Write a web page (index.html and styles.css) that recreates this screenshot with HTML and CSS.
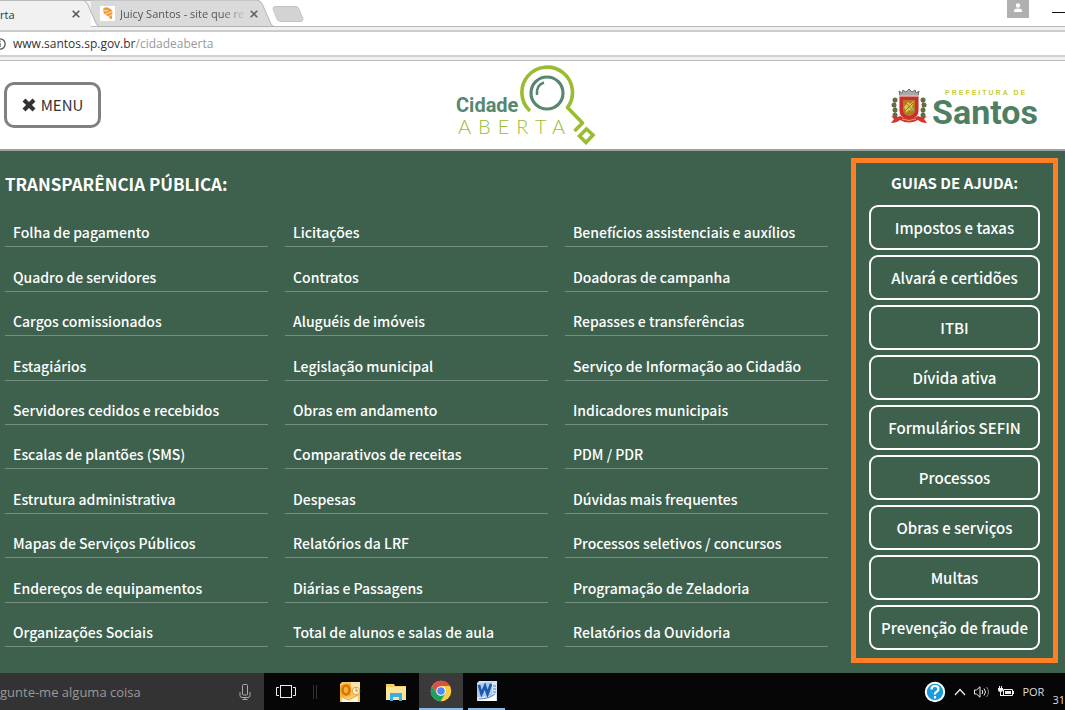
FILE: index.html
```html
<!DOCTYPE html>
<html lang="pt-BR">
<head>
    <meta charset="UTF-8">
    <meta name="viewport" content="width=device-width, initial-scale=1.0">
    <title>Cidade Aberta</title>
    <link rel="stylesheet" href="styles.css">
</head>
<body>
    <div class="Browser-Bar">
        <div class="Tabs">
            <div class="Tab Active">
                <span class="Tab-Title">rta</span>
                <button type="button" class="Tab-Close" aria-label="Fechar aba">
                    <svg width="8" height="8" viewBox="0 0 8 8"><path d="M.7.7l6.6 6.6M7.3.7L.7 7.3" stroke="#555" stroke-width="1.6"/></svg>
                </button>
            </div>
            <div class="Tab Inactive">
                <svg class="Tab-Shape" viewBox="0 0 188 27" preserveAspectRatio="none"><path d="M0 0H169Q173 0 175 4L184 24Q185 26 187 26.500H9Q6 26 5 23L0 11Z" fill="#dadada"/><path d="M0 0H169Q173 0 175 4L184 24Q185 26 187 26.500" fill="none" stroke="#b5b5b5"/><path d="M-8 0Q-5 1-3 5L5 23Q6 26 9 26.500H188" fill="none" stroke="#b0b0b0"/></svg>
                <svg class="Favicon" width="15" height="15" viewBox="0 0 15 15"><path d="M0 0h15v15H0z" fill="#fff"/><path d="M3 3Q5 0 9 2L12 4Q13 7 12 10L12 13Q9 13 8 10Q3 9 3 3Z" fill="#f49a35"/><path d="M2 5L8 4.500M5 8.500L12 5.500M8 11L13 8" stroke="#fff" stroke-width=".7"/></svg>
                <span class="Tab-Title Fade">Juicy Santos - site que re</span>
                <button type="button" class="Tab-Close" aria-label="Fechar aba">
                    <svg width="8" height="8" viewBox="0 0 8 8"><path d="M.7.7l6.6 6.6M7.3.7L.7 7.3" stroke="#666" stroke-width="1.600"/></svg>
                </button>
            </div>
            <button type="button" class="New-Tab" aria-label="Nova aba">
                <svg width="32" height="16" viewBox="0 0 32 16"><path d="M3 .5H24Q26 .5 27 3L31 13Q31 15.500 29 15.500H9Q6 15.500 5 13L1 3Q1 .5 3 .5Z" fill="#d3d3d3" stroke="#c4c4c4"/></svg>
            </button>
            <div class="Window-Buttons">
                <button type="button" class="Profile" aria-label="Perfil">
                    <svg width="8" height="9" viewBox="0 0 8 9"><circle cx="4" cy="2.500" r="2.200" fill="#fff"/><path d="M0 9V7.500Q0 5.500 4 5.500T8 7.500V9Z" fill="#fff"/></svg>
                </button>
                <button type="button" class="Minimize" aria-label="Minimizar"></button>
            </div>
        </div>
        <div class="Address">
            <svg class="Info" width="12" height="12" viewBox="0 0 12 12"><circle cx="6" cy="6" r="5.200" fill="none" stroke="#555" stroke-width="1.300"/><path d="M6 5v4M6 2.800v1.300" stroke="#555" stroke-width="1.300"/></svg>
            <span class="Url">www.santos.sp.gov.br<span class="Path">/cidadeaberta</span></span>
        </div>
    </div>

    <header class="Site-Header">
        <button type="button" class="Menu-Button">
            <svg width="14" height="14" viewBox="0 0 14 14"><path d="M2 2l10 10M12 2L2 12" stroke="#333" stroke-width="4.200"/></svg>
            MENU
        </button>
        <svg class="Logo-Cidade" width="144" height="80" viewBox="0 0 144 80" role="img" aria-label="Cidade Aberta">
            <text x="1" y="47" class="Cidade-Text">Cidade</text>
            <text x="3" y="69" class="Aberta-Text">ABERTA</text>
            <g fill="none" stroke="#9abc33" stroke-width="3.600" stroke-linejoin="round">
                <path d="M75 46A25.300 25.300 0 1 1 112.500 42.500L127.500 58L119.500 66"/>
                <path d="M131.500 64L138 70L131 77.500L124.500 71Z" stroke-linejoin="miter"/>
            </g>
            <g fill="none" stroke="#57876f">
                <circle cx="92" cy="28" r="16" stroke-width="3.200"/>
                <path d="M82 30Q81 20 89 17.500" stroke-width="2.600"/>
            </g>
        </svg>
        <svg class="Logo-Santos" width="150" height="54" viewBox="0 0 150 54" role="img" aria-label="Prefeitura de Santos">
            <g transform="translate(1 9)">
                <g fill="#5d6d49"><circle cx="5" cy="13" r="2.500"/><circle cx="4" cy="18" r="2.500"/><circle cx="5" cy="23" r="2.500"/><circle cx="5" cy="28" r="2.500"/><circle cx="33" cy="13" r="2.500"/><circle cx="34" cy="18" r="2.500"/><circle cx="33" cy="23" r="2.500"/><circle cx="33" cy="28" r="2.500"/></g>
                <path d="M5 11v20M33 11v20" stroke="#7d6544"/>
                <path d="M10 9L9 4l3 2 1-3 3 2 3-3 3 3 3-2 1 3 3-2-1 5Z" fill="#aaa" stroke="#6f6f6f"/>
                <path d="M9 9H29V24Q29 31 19 33Q9 31 9 24Z" fill="#c83029" stroke="#eee"/>
                <path d="M13 13H25V23Q25 28 19 29Q13 28 13 23Z" fill="#b47b28"/>
                <path d="M14 20l4-5 2 2 4-3-2 6 2 4-5-1-3 3-1-4Z" fill="#e7c34a"/>
                <path d="M16 16l7 8M15 24l8-8" stroke="#579047"/>
                <path d="M1 29Q7 31 10 29Q19 34 28 29Q32 31 37 29L34 32L37 36Q31 36 28 33Q19 38 10 33Q7 36 1 36L4 32Z" fill="#d4342c"/>
                <path d="M12 32q7 3 14 0" stroke="#e4a05a" fill="none"/>
            </g>
            <text x="56" y="17" class="Prefeitura-Text">PREFEITURA DE</text>
            <text x="43" y="46" class="Santos-Text">Santos</text>
        </svg>
    </header>

    <main class="Main-Section">
        <section class="Transparencia">
            <h2>TRANSPARÊNCIA PÚBLICA:</h2>
            <div class="Columns">
                <ul>
                    <li><a href="#">Folha de pagamento</a></li>
                    <li><a href="#">Quadro de servidores</a></li>
                    <li><a href="#">Cargos comissionados</a></li>
                    <li><a href="#">Estagiários</a></li>
                    <li><a href="#">Servidores cedidos e recebidos</a></li>
                    <li><a href="#">Escalas de plantões (SMS)</a></li>
                    <li><a href="#">Estrutura administrativa</a></li>
                    <li><a href="#">Mapas de Serviços Públicos</a></li>
                    <li><a href="#">Endereços de equipamentos</a></li>
                    <li><a href="#">Organizações Sociais</a></li>
                </ul>
                <ul>
                    <li><a href="#">Licitações</a></li>
                    <li><a href="#">Contratos</a></li>
                    <li><a href="#">Aluguéis de imóveis</a></li>
                    <li><a href="#">Legislação municipal</a></li>
                    <li><a href="#">Obras em andamento</a></li>
                    <li><a href="#">Comparativos de receitas</a></li>
                    <li><a href="#">Despesas</a></li>
                    <li><a href="#">Relatórios da LRF</a></li>
                    <li><a href="#">Diárias e Passagens</a></li>
                    <li><a href="#">Total de alunos e salas de aula</a></li>
                </ul>
                <ul>
                    <li><a href="#">Benefícios assistenciais e auxílios</a></li>
                    <li><a href="#">Doadoras de campanha</a></li>
                    <li><a href="#">Repasses e transferências</a></li>
                    <li><a href="#">Serviço de Informação ao Cidadão</a></li>
                    <li><a href="#">Indicadores municipais</a></li>
                    <li><a href="#">PDM / PDR</a></li>
                    <li><a href="#">Dúvidas mais frequentes</a></li>
                    <li><a href="#">Processos seletivos / concursos</a></li>
                    <li><a href="#">Programação de Zeladoria</a></li>
                    <li><a href="#">Relatórios da Ouvidoria</a></li>
                </ul>
            </div>
        </section>
        <aside class="Guias">
            <h2>GUIAS DE AJUDA:</h2>
            <button type="button">Impostos e taxas</button>
            <button type="button">Alvará e certidões</button>
            <button type="button">ITBI</button>
            <button type="button">Dívida ativa</button>
            <button type="button">Formulários SEFIN</button>
            <button type="button">Processos</button>
            <button type="button">Obras e serviços</button>
            <button type="button">Multas</button>
            <button type="button">Prevenção de fraude</button>
        </aside>
    </main>

    <footer class="Taskbar">
        <div class="Search">
            <input type="text" placeholder="gunte-me alguma coisa" aria-label="Pesquisar">
            <svg width="12" height="16" viewBox="0 0 12 16" fill="none" stroke="#aaa"><rect x="3.500" y=".5" width="5" height="10.500" rx="1"/><path d="M1 8v3.500q0 2 2 2h6q2 0 2-2V8M6 13.500v2M3.500 15.500h5"/></svg>
        </div>
        <button type="button" class="Task-View" aria-label="Visão de tarefas">
            <svg width="20" height="14" viewBox="0 0 20 14" fill="none" stroke="#eee"><rect x="4.500" y=".5" width="11" height="12"/><path d="M3 2.500H.5v8H3M17 2.500h2.500v8H17"/></svg>
        </button>
        <span class="Divider"></span>
        <button type="button" class="App" aria-label="Outlook">
            <svg width="22" height="22" viewBox="0 0 22 22"><path d="M3 1h18v20H1V3Z" fill="#f7c95c"/><path d="M11 1h10v8H13Z" fill="#fbe5a4"/><path d="M1 4l11-2v13L1 16Z" fill="#f5b335"/><ellipse cx="7" cy="9" rx="3.500" ry="4.500" fill="none" stroke="#d9730d" stroke-width="2.600"/><circle cx="17" cy="10" r="3.800" fill="#fff0ce" stroke="#e3a13a"/><path d="M17 10V7.500M17 10h2" stroke="#c77d1c"/><path d="M3 16l7 2 9-4v7H3Z" fill="#fff5dd"/><path d="M3 16l7 3 9-5" stroke="#dfa146" fill="none"/></svg>
        </button>
        <button type="button" class="App" aria-label="Explorador de arquivos">
            <svg width="22" height="18" viewBox="0 0 22 18"><path d="M1 1h8l1 2h11v14H1Z" fill="#f5cd63"/><path d="M1 4h20v13H1Z" fill="#fde597"/><path d="M5 18V10h12v8h-3v-4H8v4Z" fill="#39aee5"/></svg>
        </button>
        <button type="button" class="App Selected" aria-label="Chrome">
            <svg width="22" height="22" viewBox="0 0 22 22"><circle cx="11" cy="11" r="10.300" fill="#ffcd40"/><path d="M2 6A10.300 10.300 0 0 1 20 6H11L6.700 13.500Z" fill="#dd5144"/><path d="M2 6A10.300 10.300 0 0 0 10.500 21.300L15.300 13.500L6.700 13.500Z" fill="#1aa260"/><circle cx="11" cy="11" r="4.800" fill="#fff"/><circle cx="11" cy="11" r="3.800" fill="#4c8bf5"/></svg>
        </button>
        <button type="button" class="App Open" aria-label="Word">
            <svg width="22" height="22" viewBox="0 0 22 22"><path d="M3 1h18v20H1V3Z" fill="#d5e4f5"/><path d="M1 4l15-2v14L1 17Z" fill="#a9c8ec"/><path d="M3 5l2.500 9L9 6l2.500 8L15 4" fill="none" stroke="#1d56ab" stroke-width="2.600"/><path d="M17 6h3M17 9h3M17 12h3" stroke="#4d83c6"/><path d="M3 18q9 2 17-4v7H3Z" fill="#fff"/><path d="M3 19q10 0 16-5" stroke="#4f87cc" fill="none"/></svg>
        </button>
        <div class="Tray">
            <button type="button" aria-label="Ajuda">
                <svg width="22" height="22" viewBox="0 0 22 22"><circle cx="11" cy="11" r="9.200" fill="#189bdd" stroke="#fff" stroke-width="2"/><path d="M7.500 8.500q0-3.500 3.500-3.500t3.500 3q0 1.500-2 2.800T11 13.500M11 15v2.500" fill="none" stroke="#fff" stroke-width="2.200"/></svg>
            </button>
            <button type="button" aria-label="Mostrar ícones ocultos">
                <svg width="12" height="8" viewBox="0 0 12 8"><path d="M1 7l5-5.500L11 7" fill="none" stroke="#eee" stroke-width="1.300"/></svg>
            </button>
            <button type="button" aria-label="Volume">
                <svg width="16" height="12" viewBox="0 0 16 12" fill="none" stroke="#eee"><path d="M.5 4h2L6 .8v10.400L2.500 8h-2Z"/><path d="M8 4q1.500 2 0 4M10 2.500q3 3.500 0 7"/><path d="M12.500 1q4 5 0 10" stroke="#888"/></svg>
            </button>
            <button type="button" aria-label="Bateria">
                <svg width="16" height="12" viewBox="0 0 16 12"><path d="M5.500 3.500h9v6h-9Z" fill="none" stroke="#eee"/><path d="M7 5h6v3H7ZM15 5h1v3h-1zM0 2h5v2q0 2-2.500 2T0 4ZM1 0h1v2H1zM3 0h1v2H3zM2 5h1v4h3v1H2z" fill="#eee"/></svg>
            </button>
            <span class="Lang">POR</span>
            <span class="Clock">31</span>
        </div>
    </footer>
</body>
</html>
```
FILE: styles.css
```css
*{
    box-sizing: border-box;
    padding: 0;
    margin: 0;
}
body{
    min-height: 100vh;
    display: flex;
    flex-direction: column;
    overflow-x: hidden;
    font-family: "Noto Sans CJK JP", "Open Sans", sans-serif;
    background-color: #fff;
}
button{
    font-family: inherit;
    border: none;
    background: none;
    cursor: pointer;
}
svg{
    display: block;
    flex: none;
}

/* browser */
.Browser-Bar{
    font-family: "Open Sans", sans-serif;
    border-bottom: 1px solid #b9b9b9;
    background-color: #f1f1f1;
}
.Tabs{
    display: flex;
    height: 27px;
    background-color: #fff;
    border-bottom: 1px solid #b9b9b9;
}
.Tab{
    display: flex;
    align-items: center;
    height: 27px;
    font-size: 11px;
    color: #333;
}
.Tab.Active{
    width: 91px;
    justify-content: space-between;
    padding-right: 11px;
    background-color: #f1f1f1;
    border-top: 1px solid #b9b9b9;
}
.Tab.Inactive{
    position: relative;
    width: 184px;
    padding-left: 9px;
    color: #555;
}
.Tab-Shape{
    position: absolute;
    top: 0;
    left: 0;
    width: 100%;
    height: 27px;
    overflow: visible;
}
.Favicon, .Tab-Title, .Tab-Close{
    position: relative;
}
.Tab-Title.Fade{
    width: 128px;
    margin: 0 2px 0 5px;
    white-space: nowrap;
    -webkit-mask-image: linear-gradient(to right, #000 80%, transparent);
    mask-image: linear-gradient(to right, #000 80%, transparent);
}
.New-Tab{
    align-self: flex-start;
    padding-top: 6px;
    margin-left: -3px;
}
.Window-Buttons{
    display: flex;
    margin-left: auto;
    gap: 23px;
}
.Profile{
    width: 22px;
    height: 18px;
    display: flex;
    align-items: center;
    justify-content: center;
    padding-bottom: 4px;
    background-color: #b0b0b0;
}
.Minimize{
    width: 13px;
    height: 13px;
    border-bottom: 1px solid #111;
}
.Address{
    display: flex;
    align-items: center;
    gap: 7px;
    height: 27px;
    margin: 3px 0 3px -6px;
    background-color: #fff;
    border-top: 2px solid #ccc;
    border-bottom: 2px solid #d0d0d0;
    font-size: 12px;
    line-height: 18px;
    color: #333;
}
.Address .Path{
    color: #999;
}

/* header */
.Site-Header{
    display: flex;
    align-items: center;
    justify-content: space-between;
    height: 90px;
    padding: 0 26px 0 4px;
    border-bottom: 2px solid #9aa39e;
}
.Menu-Button{
    display: flex;
    align-items: center;
    justify-content: center;
    gap: 5px;
    width: 97px;
    height: 46px;
    border: 3px solid #808080;
    border-radius: 10px;
    font-size: 15px;
    line-height: 24px;
    color: #333;
}
.Logo-Cidade{
    margin-left: 63px;
}
.Cidade-Text{
    font: bold 20px Roboto, sans-serif;
    fill: #57876f;
}
.Aberta-Text{
    font: 300 20px Lato, sans-serif;
    letter-spacing: 7px;
    fill: #9abc33;
}
.Prefeitura-Text{
    font: bold 7px "Liberation Sans", sans-serif;
    letter-spacing: 2px;
    fill: #cccb3c;
}
.Santos-Text{
    font: bold 34px Roboto, sans-serif;
    fill: #4f7f62;
}

/* menu */
.Main-Section{
    flex: 1;
    display: flex;
    gap: 23px;
    padding: 7px 7px 10px 5px;
    background-color: #3e614e;
    color: #fff;
}
.Main-Section h2{
    font-size: 17px;
    line-height: 24px;
    font-weight: 700;
}
.Transparencia{
    flex: 1;
    display: flex;
    flex-direction: column;
    padding: 14px 0 16px;
}
.Columns{
    flex: 1;
    display: grid;
    grid-template-columns: repeat(3, minmax(0, 1fr));
    gap: 17px;
    padding-top: 7px;
}
.Columns ul{
    list-style: none;
    display: flex;
    flex-direction: column;
}
.Columns li{
    flex: 1;
    display: flex;
    align-items: flex-end;
    padding: 0 8px 2px;
    border-bottom: 1px solid #748f80;
}
.Columns a{
    font-size: 14px;
    line-height: 24px;
    font-weight: 500;
    color: #fff;
    text-decoration: none;
    white-space: nowrap;
}
.Guias{
    width: 207px;
    display: flex;
    flex-direction: column;
    gap: 5px;
    padding: 8px 13px;
    border: 5px solid #ff7f27;
}
.Guias h2{
    font-size: 15px;
    text-align: center;
    margin-bottom: 5px;
}
.Guias button{
    height: 45px;
    border: 2px solid #fff;
    border-radius: 9px;
    font-size: 15px;
    line-height: 24px;
    font-weight: 500;
    color: #fff;
}

/* taskbar */
.Taskbar{
    display: flex;
    align-items: center;
    height: 37px;
    background-color: #060606;
    font-family: "Open Sans", sans-serif;
}
.Search{
    display: flex;
    align-items: center;
    justify-content: space-between;
    width: 264px;
    height: 100%;
    padding-right: 13px;
    background-color: #333;
}
.Search input{
    width: 200px;
    border: none;
    outline: none;
    background: none;
    font-family: inherit;
    font-size: 13px;
    color: #fff;
}
.Search input::placeholder{
    color: #999;
}
.Task-View{
    padding: 0 17px 0 12px;
}
.Divider{
    width: 4px;
    height: 14px;
    margin-right: 10px;
    border: 1px solid #333;
    border-width: 0 1px;
}
.App{
    display: flex;
    align-items: center;
    justify-content: center;
    width: 46px;
    height: 100%;
}
.App.Selected{
    width: 44px;
    background-color: #3a3a3a;
    border-bottom: 2px solid #8ab8e8;
}
.App.Open{
    width: 37px;
    margin-left: 5px;
    border-bottom: 2px solid #8ab8e8;
}
.Tray{
    display: flex;
    align-items: center;
    gap: 8px;
    height: 100%;
    margin-left: auto;
    color: #ddd;
    font-size: 11px;
    line-height: 16px;
}
.Tray .Clock{
    align-self: flex-end;
    padding-bottom: 2px;
}
```
